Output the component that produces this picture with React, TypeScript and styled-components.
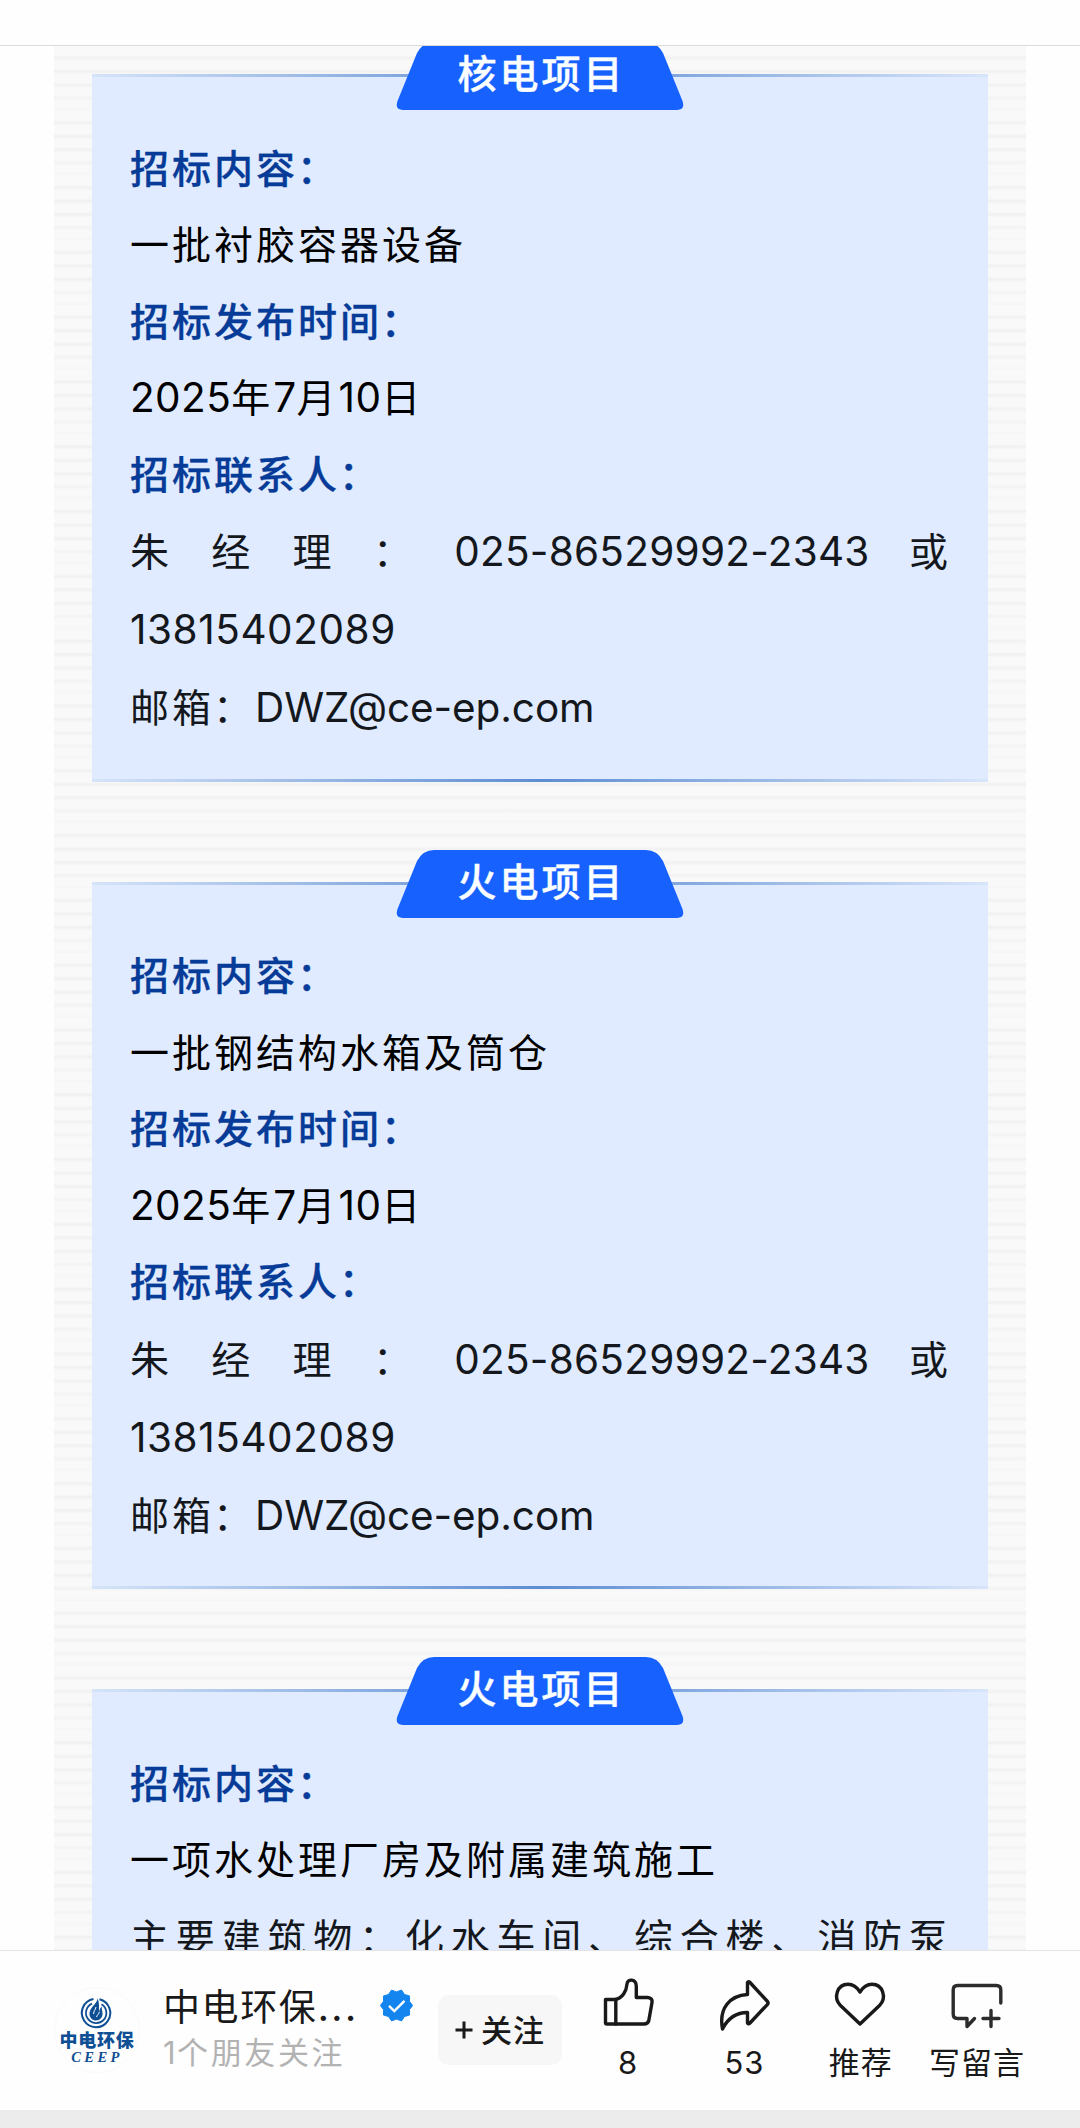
import React from 'react';
import styled, { createGlobalStyle } from 'styled-components';

const cjk = `"Noto Sans CJK SC", sans-serif`;

const GlobalStyle = createGlobalStyle`
  * { box-sizing: border-box; }
  html, body { margin: 0; padding: 0; background: #fff; }
  body { font-family: ${cjk}; color: #191919; overflow: hidden; }
`;

const Screen = styled.div`
  width: 1080px;
  height: 2128px;
  display: flex;
  flex-direction: column;
  background: #fefefe;
  overflow: hidden;
`;

const TopBar = styled.header`
  flex: none;
  height: 46px;
  background: #fefefe;
  border-bottom: 1px solid #dcdcdc;
`;

const Viewport = styled.main`
  flex: 1;
  min-height: 0;
  overflow: hidden;
  display: flex;
  justify-content: center;
  align-items: flex-start;
`;

const Article = styled.article`
  flex: none;
  width: 972px;
  height: 1930px;
  padding: 28px 38px 0;
  display: flex;
  flex-direction: column;
  gap: 100px;
  background-color: #f9f9f9;
  background-image: repeating-linear-gradient(
    180deg,
    #f9f9f9 0px, #f9f9f9 9px,
    #f1f1f1 12px, #f9f9f9 15px, #f9f9f9 22.5px,
    #f1f1f1 25.5px, #f9f9f9 28.5px, #f9f9f9 36px,
    #f1f1f1 39px, #f9f9f9 42px, #f9f9f9 49px,
    #f3f3f3 52px, #f9f9f9 55px, #f9f9f9 60px,
    #f6f6f6 64px, #f9f9f9 64.8px
  );
`;

const fade = 'linear-gradient(90deg, #d5e4f8 0%, #5d8dd2 50%, #d8e5fa 100%)';

const Card = styled.section`
  flex: none;
  height: 707.5px;
  display: flex;
  flex-direction: column;
  background: ${fade} top / 100% 3px no-repeat, ${fade} bottom / 100% 3px no-repeat, #e0ebff;
`;

const Tab = styled.div`
  flex: none;
  width: 288px;
  height: 68px;
  margin: -32px auto 0;
  display: grid;
  place-items: center;
  > * { grid-area: 1 / 1; }
`;

const TabShape = styled.svg`
  display: block;
`;

const TabTitle = styled.h2`
  margin: 0 0 9px;
  padding-left: 3px;
  font: 500 39px/59px ${cjk};
  letter-spacing: 3px;
  color: #fbfeff;
  -webkit-text-stroke: 0.4px #fbfeff;
`;

const Body = styled.div`
  padding: 17.5px 37px 0 38px;
`;

const Label = styled.p`
  margin: 0;
  height: 76.6px;
  font: 500 39px/76.6px ${cjk};
  letter-spacing: 3px;
  color: #063b98;
  -webkit-text-stroke: 0.3px #063b98;
`;

const Value = styled.p`
  margin: 0;
  height: 76.6px;
  font: 400 39px/76.6px ${cjk};
  letter-spacing: 3px;
  color: #000;
  white-space: nowrap;
`;

const Contact = styled(Value)`
  height: 78px;
  line-height: 78px;
  color: #14181d;
`;

const Spread = styled(Contact)`
  display: flex;
  justify-content: space-between;
  align-items: baseline;
`;

const Colon = styled.span`
  margin-left: -1px;
`;

const Num = styled.span<{ $gap?: number }>`
  font-family: Inter, ${cjk};
  font-size: 40.5px;
  font-weight: 370;
  letter-spacing: ${(p) => p.$gap ?? 0.55}px;
`;

const Footer = styled.footer`
  flex: none;
  height: 160px;
  border-top: 1px solid #e4e4e4;
  background: #fefefe;
  display: flex;
  align-items: flex-start;
`;

const HomeStrip = styled.div`
  flex: none;
  height: 18px;
  background: #ececec;
`;

const Avatar = styled.div`
  width: 86px;
  height: 86px;
  margin: 36px 0 0 54px;
  border: 1px solid #fafafa;
  border-radius: 50%;
  display: flex;
  flex-direction: column;
  align-items: center;
  color: #0f4f94;
`;

const Emblem = styled.svg`
  flex: none;
  margin: 9px 2px 0 0;
`;

const LogoName = styled.div`
  font: 900 18px/20px ${cjk};
  letter-spacing: 0.8px;
  white-space: nowrap;
`;

const LogoLatin = styled.div`
  margin-top: 2px;
  font: italic bold 14.5px/12px "Liberation Serif", serif;
  letter-spacing: 3.4px;
`;

const Account = styled.div`
  width: 250px;
  margin: 27.5px 0 0 23px;
`;

const NameRow = styled.div`
  display: flex;
  align-items: center;
  justify-content: space-between;
  height: 54px;
`;

const AccountName = styled.div`
  font: 400 37px/54px ${cjk};
  letter-spacing: 1.6px;
`;

const Friends = styled.div`
  font: 400 31px/35px ${cjk};
  letter-spacing: 2.6px;
  color: #b2b2b2;
`;

const One = styled.span`
  font-family: Inter, ${cjk};
  letter-spacing: 1.5px;
`;

const Follow = styled.button`
  width: 124px;
  height: 70px;
  margin: 44px 0 0 25px;
  padding: 0;
  border: 0;
  border-radius: 11px;
  background: #f7f7f7;
  color: #191919;
  display: flex;
  align-items: center;
  justify-content: center;
  gap: 8px;
  font: 500 31px/66px ${cjk};
  letter-spacing: 1px;
`;

const FollowText = styled.span`
  margin-bottom: 3px;
`;

const Actions = styled.nav`
  flex: 1;
  margin-left: 7.5px;
  display: grid;
  grid-template-columns: repeat(4, 116.3px);
`;

const Action = styled.div`
  padding-top: 22px;
  display: flex;
  flex-direction: column;
  align-items: center;
`;

const Caption = styled.span`
  margin-top: 6.5px;
  font: 400 31px/46px Inter, ${cjk};
  letter-spacing: 1px;
  margin-right: -1px;
  white-space: nowrap;
`;

const line = {
  fill: 'none',
  stroke: '#191919',
  strokeWidth: 3.4,
  strokeLinecap: 'round' as const,
  strokeLinejoin: 'round' as const,
};

const icons = {
  like: (
    <>
      <path d="M8.500 26.500H18C25.500 25.500 29.500 18 30 11C30.500 5.500 39.300 5.500 39.300 13.500V24.500H50.500Q55.800 25 55 29.500L51.800 47.500Q51 51 47 51H10Q8.500 51 8.500 49.500Z" />
      <path d="M18.800 26.500V51" />
    </>
  ),
  share: (
    <path d="M34.500 9.500Q35.500 8 37 9.500L54.500 28.500Q55.700 30 54.500 31.300L37 50Q35.500 51.500 34.500 50V39.500C22 39.500 14 47 9.500 56C5.500 35 17 22.500 34.500 21.500Z" />
  ),
  heart: (
    <path d="M31 51L11.500 32.500C4 25 8 11.300 19 11.300C24.500 11.300 28.500 15 31 19C33.500 15 37.500 11.300 43 11.300C54 11.300 58 25 50.500 32.500Z" />
  ),
  comment: (
    <>
      <path stroke="#2c2c2c" d="M54.800 30V17Q54.800 12.500 50.300 12.500H11.500Q7.200 12.500 7.200 17V41Q7.200 45.500 11.500 45.500H21V53.500L28.500 45.500" />
      <path stroke="#2c2c2c" d="M37 45.500H53M45 37.500V53.500" />
    </>
  ),
};

const VerifiedBadge = () => {
  const points = Array.from({ length: 20 }, (_, i) => {
    const r = i % 2 ? 13.6 : 16.2;
    const a = (i * Math.PI) / 10 + Math.PI / 10;
    return `${16.5 + r * Math.sin(a)},${16.5 - r * Math.cos(a)}`;
  }).join(' ');
  return (
    <svg width="33" height="33" viewBox="0 0 33 33">
      <polygon points={points} fill="#1485ee" stroke="#1485ee" strokeLinejoin="round" />
      <path d="M9 16.8L14.3 22L24.5 11.8" fill="none" stroke="#fff" strokeWidth="2.4" />
    </svg>
  );
};

const BidCard = ({ title, children }: { title: string; children: React.ReactNode }) => (
  <Card>
    <Tab>
      <TabShape width="288" height="68" viewBox="0 0 288 68">
        <path
          fill="#1762ff"
          d="M38 0H250Q261 0 267 11L286.500 59Q289.500 68 281 68H7Q-1.500 68 1.500 59L21 11Q27 0 38 0Z"
        />
      </TabShape>
      <TabTitle>{title}</TabTitle>
    </Tab>
    <Body>{children}</Body>
  </Card>
);

const StandardBid = ({ title, content }: { title: string; content: string }) => (
  <BidCard title={title}>
    <Label>
      招标内容<Colon>：</Colon>
    </Label>
    <Value>{content}</Value>
    <Label>
      招标发布时间<Colon>：</Colon>
    </Label>
    <Value>
      <Num $gap={0.4}>2025</Num>年<Num $gap={0.4}>7</Num>月<Num $gap={0.4}>10</Num>日
    </Value>
    <Label>
      招标联系人<Colon>：</Colon>
    </Label>
    <Spread>
      {['朱', '经', '理'].map((c) => (
        <span key={c}>{c}</span>
      ))}
      <Colon>：</Colon>
      <Num $gap={0.25}>025-86529992-2343</Num>
      <span>或</span>
    </Spread>
    <Contact>
      <Num>13815402089</Num>
    </Contact>
    <Contact>
      邮箱<Colon>：</Colon>
      <Num $gap={-0.1}>DWZ@ce-ep.com</Num>
    </Contact>
  </BidCard>
);

export default function App() {
  return (
    <>
      <GlobalStyle />
      <Screen>
        <TopBar />
        <Viewport>
          <Article>
            <StandardBid title="核电项目" content="一批衬胶容器设备" />
            <StandardBid title="火电项目" content="一批钢结构水箱及筒仓" />
            <BidCard title="火电项目">
              <Label>
                招标内容<Colon>：</Colon>
              </Label>
              <Value>一项水处理厂房及附属建筑施工</Value>
              <Spread>
                {[...'主要建筑物：化水车间、综合楼、消防泵'].map((c, i) => (
                  <span key={i}>{c}</span>
                ))}
              </Spread>
            </BidCard>
          </Article>
        </Viewport>
        <Footer>
          <Avatar>
            <Emblem width="32" height="32" viewBox="0 0 32 32" fill="none" stroke="#0f4f94">
              <path d="M13.500 2A14.200 14.200 0 1 0 19.500 2.200" strokeWidth="2" />
              <path d="M12 6.600A10.200 10.200 0 1 0 21.500 7.200" strokeWidth="1.800" />
              <path
                d="M17.500 1.500C17 7 10 10 9.500 16C9 21 13 23.500 16 23.500C20 23.500 23 20 22.500 16C22.300 13.500 21.500 12 21.800 9.500C20 11 19.500 13 19.300 15C18.500 11 20 7 17.500 1.500Z"
                fill="#0f4f94"
                stroke="none"
              />
              <path d="M16 10C15.500 13 13.500 14 13.600 17M19.300 15C19 17 17 18 16.500 20" stroke="#fff" strokeWidth="1" />
            </Emblem>
            <LogoName>中电环保</LogoName>
            <LogoLatin>CEEP</LogoLatin>
          </Avatar>
          <Account>
            <NameRow>
              <AccountName>
                中电环保<Num $gap={2}>...</Num>
              </AccountName>
              <VerifiedBadge />
            </NameRow>
            <Friends>
              <One>1</One>个朋友关注
            </Friends>
          </Account>
          <Follow>
            <svg width="18" height="18" viewBox="0 0 18 18">
              <path d="M9 0.500V17.500M0.500 9H17.500" stroke="#191919" strokeWidth="3" />
            </svg>
            <FollowText>关注</FollowText>
          </Follow>
          <Actions>
            {(
              [
                ['like', '8'],
                ['share', '53'],
                ['heart', '推荐'],
                ['comment', '写留言'],
              ] as const
            ).map(([icon, text]) => (
              <Action key={icon}>
                <svg width="62" height="60" viewBox="0 0 62 60" {...line}>
                  {icons[icon]}
                </svg>
                <Caption>{text}</Caption>
              </Action>
            ))}
          </Actions>
        </Footer>
        <HomeStrip />
      </Screen>
    </>
  );
}
